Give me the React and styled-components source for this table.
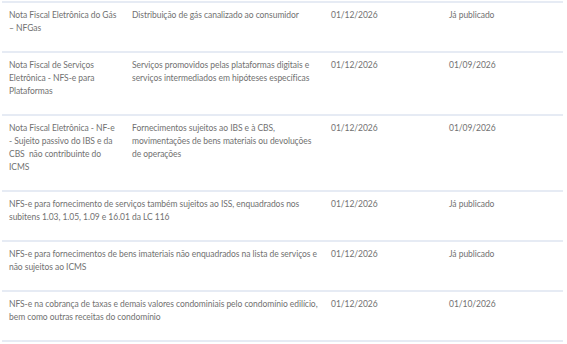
import React from "react";
import styled, { createGlobalStyle } from "styled-components";

const Global = createGlobalStyle`
  html, body { margin: 0; padding: 0; background: #fff; }
  body { font-family: "Lato", "Open Sans", sans-serif; }
`;

const Page = styled.div`
  padding: 1px 4px 0 2px;
`;

const Table = styled.table`
  width: 561px;
  border-collapse: collapse;
  table-layout: fixed;
  color: #717171;
  font-size: 8.5px;
  line-height: 13px;
  letter-spacing: -0.05px;
`;

const Row = styled.tr`
  border-top: 2px solid #e6ebf4;
  &:last-child { border-bottom: 2px solid #e6ebf4; }
`;

const Cell = styled.td`
  vertical-align: top;
  padding: 6px ${(p) => (p.$padR ?? 4)}px 16px 7px;
  text-align: left;
`;

const Col = styled.col`
  width: ${(p) => p.$w}px;
`;

const rows = [
  { name: "Nota Fiscal Eletrônica do Gás – NFGas", desc: "Distribuição de gás canalizado ao consumidor", a: "01/12/2026", b: "Já publicado" },
  { name: "Nota Fiscal de Serviços Eletrônica - NFS-e para Plataformas", desc: "Serviços promovidos pelas plataformas digitais e serviços intermediados em hipóteses específicas", a: "01/12/2026", b: "01/09/2026" },
  { name: "Nota Fiscal Eletrônica - NF-e - Sujeito passivo do IBS e da CBS\u00a0 não contribuinte do ICMS", desc: "Fornecimentos sujeitos ao IBS e à CBS, movimentações de bens materiais ou devoluções de operações", a: "01/12/2026", b: "01/09/2026" },
  { wide: "NFS-e para fornecimento de serviços também sujeitos ao ISS, enquadrados nos subitens 1.03, 1.05, 1.09 e 16.01 da LC 116", a: "01/12/2026", b: "Já publicado" },
  { wide: "NFS-e para fornecimentos de bens imateriais não enquadrados na lista de serviços e não sujeitos ao ICMS", a: "01/12/2026", b: "Já publicado" },
  { wide: "NFS-e na cobrança de taxas e demais valores condominiais pelo condomínio edilício, bem como outras receitas do condomínio", a: "01/12/2026", b: "01/10/2026" },
];

export default function App() {
  return (
    <>
      <Global />
      <Page>
        <Table>
          <colgroup>
            <Col $w={123} />
            <Col $w={199} />
            <Col $w={118} />
            <Col $w={121} />
          </colgroup>
          <tbody>
            {rows.map((r, i) => (
              <Row key={i}>
                {r.wide ? (
                  <Cell colSpan={2}>{r.wide}</Cell>
                ) : (
                  <>
                    <Cell $padR={6.5}>{r.name}</Cell>
                    <Cell>{r.desc}</Cell>
                  </>
                )}
                <Cell>{r.a}</Cell>
                <Cell>{r.b}</Cell>
              </Row>
            ))}
          </tbody>
        </Table>
      </Page>
    </>
  );
}
